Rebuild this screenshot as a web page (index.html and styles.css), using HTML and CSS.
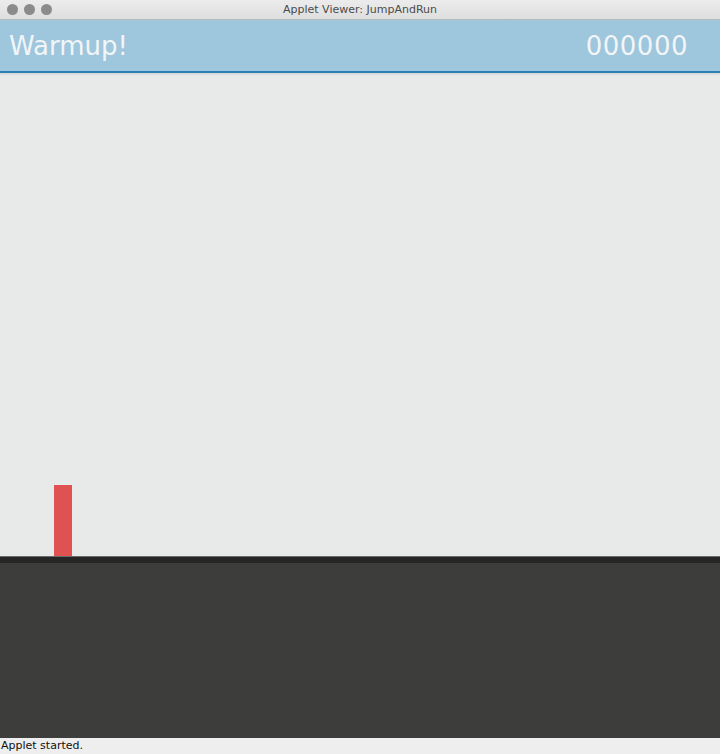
FILE: index.html
```html
<!DOCTYPE html>
<html>
<head>
<meta charset="utf-8">
<link rel="stylesheet" href="styles.css">
</head>
<body>
<div class="window">
  <div class="titlebar">
    <div class="lights">
      <span class="light"></span><span class="light"></span><span class="light"></span>
    </div>
    <div class="title">Applet Viewer: JumpAndRun</div>
  </div>
  <div class="hud">
    <div class="level">Warmup!</div>
    <div class="score">000000</div>
  </div>
  <div class="hud-line"></div>
  <div class="stage">
    <div class="sky">
      <div class="player"></div>
    </div>
    <div class="ground"></div>
  </div>
  <div class="status">Applet started.</div>
</div>
</body>
</html>
```
FILE: styles.css
```css
html, body {
  margin: 0;
  padding: 0;
}
body {
  width: 720px;
  height: 754px;
  overflow: hidden;
  font-family: "DejaVu Sans", "Liberation Sans", sans-serif;
}
.window {
  display: flex;
  flex-direction: column;
  height: 754px;
}
.titlebar {
  height: 19px;
  border-bottom: 1px solid #b9b9b9;
  background: linear-gradient(#ececec, #dedede);
  display: flex;
  align-items: center;
  position: relative;
}
.lights {
  display: flex;
  gap: 6px;
  padding-left: 7px;
}
.light {
  width: 11px;
  height: 11px;
  border-radius: 50%;
  background: #8b8b8b;
}
.title {
  position: absolute;
  left: 0;
  right: 0;
  text-align: center;
  font-size: 11px;
  color: #4b4b4b;
  line-height: 19px;
}
.hud {
  height: 51px;
  background: #9ec6dc;
  display: flex;
  justify-content: space-between;
  align-items: center;
  padding: 0 32px 0 9px;
  color: #f2f5f7;
  font-size: 26px;
}
.score {
  letter-spacing: 0.5px;
}
.hud-line {
  height: 2px;
  background: #2b7fb5;
  border-bottom: 2px solid #d9dcdd;
}
.stage {
  flex: 1;
  display: flex;
  flex-direction: column;
}
.sky {
  flex: 1;
  background: #e8e9e9;
  position: relative;
}
.player {
  position: absolute;
  left: 54px;
  bottom: 0;
  width: 18px;
  height: 71px;
  background: #e05252;
}
.ground {
  height: 181px;
  background: #3d3d3c;
  border-top: 1px solid #6a6a6a;
  box-shadow: inset 0 6px 0 #262626;
}
.status {
  height: 16px;
  background: #eeeeee;
  font-size: 11px;
  line-height: 16px;
  color: #111;
  padding-left: 1px;
}
```
